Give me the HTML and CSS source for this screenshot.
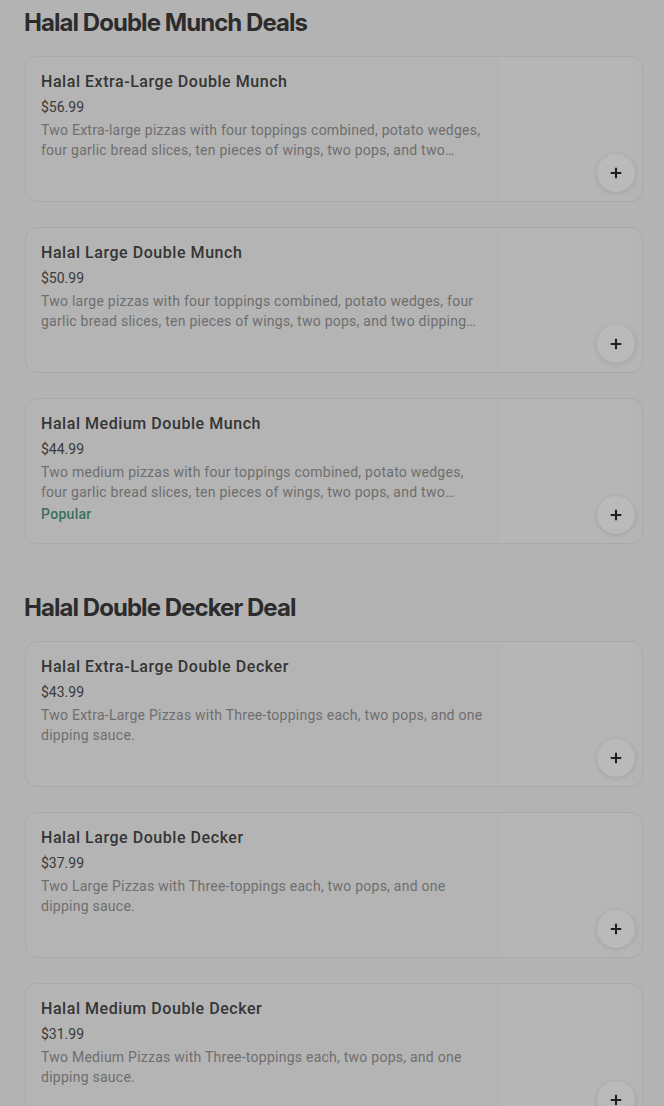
FILE: index.html
```html
<!DOCTYPE html>
<html lang="en">
<head>
<meta charset="utf-8">
<title>Menu</title>
<link rel="stylesheet" href="styles.css">
</head>
<body>
<main class="menu">
  <section class="section">
    <h2 class="section-title">Halal Double Munch Deals</h2>
    <div class="items">
      <article class="item">
        <div class="item-info">
          <h3 class="item-name">Halal Extra-Large Double Munch</h3>
          <div class="item-price">$56.99</div>
          <p class="item-desc">Two Extra-large pizzas with four toppings combined, potato wedges, four garlic bread slices, ten pieces of wings, two pops, and two…</p>
        </div>
        <div class="item-image"></div>
        <button class="add-btn" aria-label="Add"><svg viewBox="0 0 16 16" width="14" height="14"><path d="M8 2v12M2 8h12" stroke="#1f1f1f" stroke-width="2.4"/></svg></button>
      </article>
      <article class="item">
        <div class="item-info">
          <h3 class="item-name">Halal Large Double Munch</h3>
          <div class="item-price">$50.99</div>
          <p class="item-desc">Two large pizzas with four toppings combined, potato wedges, four garlic bread slices, ten pieces of wings, two pops, and two dipping…</p>
        </div>
        <div class="item-image"></div>
        <button class="add-btn" aria-label="Add"><svg viewBox="0 0 16 16" width="14" height="14"><path d="M8 2v12M2 8h12" stroke="#1f1f1f" stroke-width="2.4"/></svg></button>
      </article>
      <article class="item">
        <div class="item-info">
          <h3 class="item-name">Halal Medium Double Munch</h3>
          <div class="item-price">$44.99</div>
          <p class="item-desc">Two medium pizzas with four toppings combined, potato wedges, four garlic bread slices, ten pieces of wings, two pops, and two…</p>
          <div class="item-tag">Popular</div>
        </div>
        <div class="item-image"></div>
        <button class="add-btn" aria-label="Add"><svg viewBox="0 0 16 16" width="14" height="14"><path d="M8 2v12M2 8h12" stroke="#1f1f1f" stroke-width="2.4"/></svg></button>
      </article>
    </div>
  </section>
  <section class="section">
    <h2 class="section-title">Halal Double Decker Deal</h2>
    <div class="items">
      <article class="item">
        <div class="item-info">
          <h3 class="item-name">Halal Extra-Large Double Decker</h3>
          <div class="item-price">$43.99</div>
          <p class="item-desc">Two Extra-Large Pizzas with Three-toppings each, two pops, and one dipping sauce.</p>
        </div>
        <div class="item-image"></div>
        <button class="add-btn" aria-label="Add"><svg viewBox="0 0 16 16" width="14" height="14"><path d="M8 2v12M2 8h12" stroke="#1f1f1f" stroke-width="2.4"/></svg></button>
      </article>
      <article class="item">
        <div class="item-info">
          <h3 class="item-name">Halal Large Double Decker</h3>
          <div class="item-price">$37.99</div>
          <p class="item-desc">Two Large Pizzas with Three-toppings each, two pops, and one dipping sauce.</p>
        </div>
        <div class="item-image"></div>
        <button class="add-btn" aria-label="Add"><svg viewBox="0 0 16 16" width="14" height="14"><path d="M8 2v12M2 8h12" stroke="#1f1f1f" stroke-width="2.4"/></svg></button>
      </article>
      <article class="item">
        <div class="item-info">
          <h3 class="item-name">Halal Medium Double Decker</h3>
          <div class="item-price">$31.99</div>
          <p class="item-desc">Two Medium Pizzas with Three-toppings each, two pops, and one dipping sauce.</p>
        </div>
        <div class="item-image"></div>
        <button class="add-btn" aria-label="Add"><svg viewBox="0 0 16 16" width="14" height="14"><path d="M8 2v12M2 8h12" stroke="#1f1f1f" stroke-width="2.4"/></svg></button>
      </article>
    </div>
  </section>
</main>
</body>
</html>
```
FILE: styles.css
```css
html, body {
  margin: 0;
  padding: 0;
  background: #b3b3b3;
  font-family: Roboto, "Liberation Sans", sans-serif;
}

.menu {
  padding: 7px 21px 0 25px;
  display: flex;
  flex-direction: column;
  gap: 48px;
}

.section {
  display: flex;
  flex-direction: column;
  gap: 17px;
}

.section-title {
  margin: 0;
  margin-left: -1px;
  font-family: Inter, "Liberation Sans", sans-serif;
  font-weight: 700;
  font-size: 24px;
  line-height: 32px;
  letter-spacing: -0.95px;
  color: #2c2c2c;
}

.items {
  display: flex;
  flex-direction: column;
  gap: 25px;
}

.item {
  position: relative;
  display: flex;
  height: 146px;
  box-sizing: border-box;
  border: 1px solid #a9a9a9;
  border-radius: 12px;
  background: #b4b4b4;
  overflow: hidden;
}

.item-info {
  flex: 1;
  min-width: 0;
  padding: 13px 16px 0 15px;
}

.item-name {
  margin: 0;
  font-size: 16px;
  font-weight: 500;
  line-height: 24px;
  letter-spacing: 0.55px;
  color: #353535;
}

.item-price {
  margin-top: 3px;
  font-size: 14px;
  line-height: 20px;
  color: #3a3a3a;
}

.item-desc {
  margin: 3px 0 0;
  font-size: 14px;
  line-height: 20px;
  letter-spacing: 0.25px;
  color: #6e6e6e;
  display: -webkit-box;
  -webkit-line-clamp: 2;
  -webkit-box-orient: vertical;
  overflow: hidden;
}

.item-tag {
  margin-top: 2px;
  font-size: 14px;
  font-weight: 500;
  line-height: 20px;
  letter-spacing: 0.3px;
  color: #3b705b;
}

.item-image {
  width: 133px;
  margin-right: 10px;
  background: #b6b6b6;
}

.add-btn {
  position: absolute;
  right: 7px;
  bottom: 9px;
  width: 38px;
  height: 38px;
  padding: 0;
  border: none;
  border-radius: 50%;
  background: #bababa;
  box-shadow: 0 1px 5px rgba(0, 0, 0, 0.12);
  display: flex;
  align-items: center;
  justify-content: center;
}
```
